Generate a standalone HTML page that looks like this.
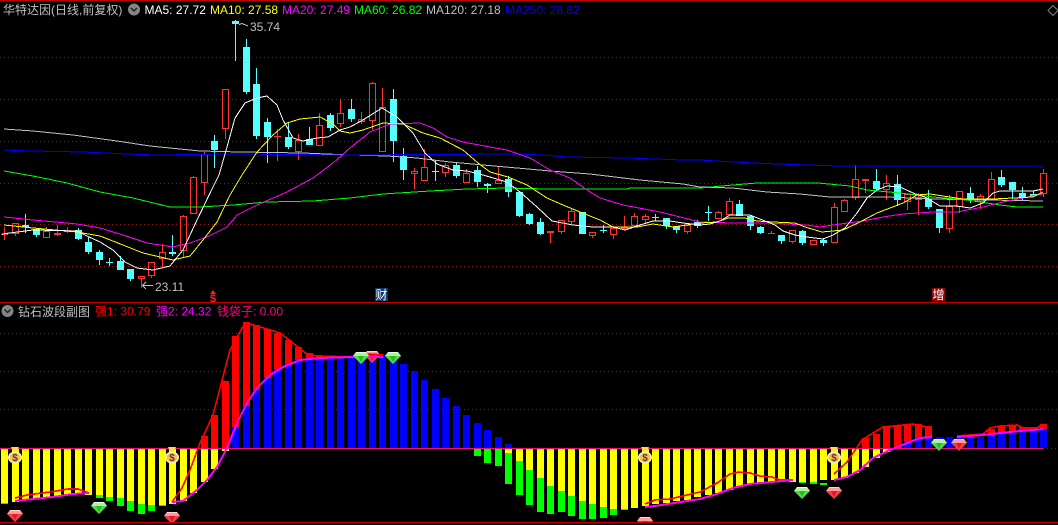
<!DOCTYPE html>
<html>
<head>
<meta charset="utf-8">
<style>
html,body{margin:0;padding:0;background:#000;width:1058px;height:525px;overflow:hidden}
svg{display:block}
text{font-family:"Liberation Sans","WenQuanYi Zen Hei","Noto Sans CJK SC",sans-serif;font-size:12px}
</style>
</head>
<body>
<svg width="1058" height="525" viewBox="0 0 1058 525" xmlns="http://www.w3.org/2000/svg">
<defs>
<clipPath id="cp"><rect x="0" y="303" width="1058" height="219"/></clipPath>
<g id="dr">
<polygon points="3,0 13,0 16,4 8,12 0,4" fill="#f04050"/>
<polygon points="3,0 13,0 16,4 0,4" fill="#ff9a9a"/>
<polygon points="5,4 11,4 8,10" fill="#e01828"/>
<path d="M3 .5h10" stroke="#ffd0d0" fill="none"/>
</g>
<g id="dg">
<polygon points="3,0 13,0 16,4 8,12 0,4" fill="#50d850"/>
<polygon points="3,0 13,0 16,4 0,4" fill="#b0f0a0"/>
<polygon points="5,4 11,4 8,10" fill="#20c020"/>
<path d="M3 .5h10" stroke="#e0ffe0" fill="none"/>
</g>
<g id="bag">
<polygon points="3,0 11,0 9,5 5,5" fill="#f8e040"/>
<ellipse cx="7" cy="10.500" rx="7" ry="6" fill="#fff2b0"/>
<ellipse cx="7" cy="10.500" rx="5.400" ry="4.800" fill="#f0c450"/>
<text x="7" y="14" text-anchor="middle" style="font-size:10px;font-weight:bold" fill="#703030">$</text>
</g>
</defs>
<rect width="1058" height="525" fill="#000"/>

<g shape-rendering="crispEdges">
<path d="M0 57.500H1058M0 99.500H1058M0 141.500H1058M0 183.500H1058M0 224.500H1058M0 266.500H1058M0 333.500H1058M0 371.500H1058M0 409.500H1058M1043 448.500H1058" stroke="#8a1414" stroke-width="1" stroke-dasharray="1 3" fill="none"/>
<rect x="0" y="0" width="1058" height="1" fill="#c00000"/>
<rect x="0" y="302" width="1058" height="1" fill="#c00000"/>
<rect x="0" y="522" width="1058" height="1" fill="#c00000"/>

<!-- cyan candles -->
<path fill="#54ffff" d="M25 214h1V233h-1zM22 225h7V227h-7zM36 228h1V237h-1zM33 229h7V235h-7zM78 228h1V240h-1zM75 230h7V239h-7zM88 237h1V254h-1zM85 242h7V252h-7zM99 250h1V265h-1zM96 252h7V260h-7zM109 258h1V266h-1zM106 262h7V263h-7zM120 256h1V270h-1zM117 261h7V270h-7zM130 269h1V281h-1zM127 269h7V279h-7zM172 235h1V256h-1zM169 252h7V254h-7zM214 135h1V168h-1zM211 141h7V150h-7zM235 20h1V61h-1zM232 21h7V24h-7zM246 39h1V94h-1zM243 47h7V92h-7zM256 68h1V139h-1zM253 84h7V136h-7zM267 118h1V163h-1zM264 122h7V137h-7zM288 122h1V149h-1zM285 137h7V147h-7zM309 127h1V145h-1zM306 139h7V145h-7zM330 113h1V131h-1zM327 115h7V128h-7zM351 99h1V122h-1zM348 109h7V119h-7zM393 89h1V162h-1zM390 99h7V141h-7zM403 148h1V180h-1zM400 156h7V170h-7zM435 160h1V181h-1zM432 171h7V172h-7zM456 162h1V178h-1zM453 165h7V176h-7zM477 166h1V187h-1zM474 170h7V182h-7zM487 183h1V193h-1zM484 184h7V186h-7zM508 176h1V197h-1zM505 179h7V192h-7zM519 192h1V217h-1zM516 192h7V216h-7zM529 213h1V225h-1zM526 214h7V224h-7zM540 218h1V235h-1zM537 222h7V234h-7zM582 212h1V234h-1zM579 212h7V234h-7zM603 225h1V233h-1zM600 230h7V231h-7zM655 214h1V221h-1zM652 217h7V218h-7zM666 218h1V229h-1zM663 218h7V226h-7zM676 226h1V233h-1zM673 226h7V230h-7zM697 220h1V228h-1zM694 222h7V226h-7zM708 206h1V221h-1zM705 212h7V213h-7zM739 200h1V216h-1zM736 204h7V216h-7zM750 215h1V230h-1zM747 216h7V226h-7zM760 226h1V234h-1zM757 227h7V233h-7zM781 235h1V244h-1zM778 235h7V241h-7zM802 230h1V245h-1zM799 231h7V243h-7zM823 238h1V246h-1zM820 240h7V243h-7zM876 169h1V191h-1zM873 181h7V189h-7zM897 175h1V206h-1zM894 184h7V200h-7zM928 190h1V209h-1zM925 199h7V207h-7zM939 209h1V233h-1zM936 209h7V228h-7zM970 187h1V203h-1zM967 193h7V200h-7zM1001 170h1V187h-1zM998 177h7V185h-7zM1012 182h1V199h-1zM1009 182h7V190h-7zM1022 187h1V200h-1zM1019 193h7V198h-7zM1033 191h1V196h-1zM1030 194h7V196h-7z"/>

<!-- red candles -->
<path fill="none" stroke="#ff3232" stroke-width="1" d="M1 234.500h7M4.500 227V240M12.500 223.500h6V233.500h-6zM15.500 234V236M43.500 231.500h6V237.500h-6zM46.500 227V231M54.500 233.500h6V234.500h-6zM57.500 225V233M57.500 235V236M64.500 230.500h6V231.500h-6zM67.500 227V230M67.500 232V233M138.500 276.500h6V278.500h-6zM141.500 279V288M148.500 262.500h6V275.500h-6zM151.500 276V278M159.500 252.500h6V258.500h-6zM162.500 244V252M162.500 259V267M180.500 216.500h6V250.500h-6zM183.500 215V216M183.500 251V258M190.500 177.500h6V213.500h-6zM193.500 176V177M201.500 154.500h6V182.500h-6zM204.500 152V154M204.500 183V195M222.500 89.500h6V128.500h-6zM225.500 129V139M274 136.500h7M277.500 129V161M295.500 140.500h6V151.500h-6zM298.500 134V140M298.500 152V160M316.500 125.500h6V145.500h-6zM319.500 113V125M337.500 113.500h6V123.500h-6zM340.500 99V113M340.500 124V127M358.500 119.500h6V121.500h-6zM361.500 112V119M361.500 122V124M369.500 83.500h6V120.500h-6zM372.500 82V83M372.500 121V130M379.500 107.500h6V151.500h-6zM382.500 88V107M411.500 171.500h6V173.500h-6zM414.500 168V171M414.500 174V189M421.500 167.500h6V180.500h-6zM424.500 149V167M442.500 165.500h6V172.500h-6zM445.500 163V165M445.500 173V177M463.500 173.500h6V182.500h-6zM466.500 169V173M495.500 180.500h6V183.500h-6zM498.500 166V180M547.500 231.500h6V232.500h-6zM550.500 233V243M558.500 220.500h6V231.500h-6zM561.500 232V234M568.500 211.500h6V221.500h-6zM571.500 208V211M571.500 222V224M589.500 232.500h6V235.500h-6zM592.500 236V238M610.500 228.500h6V234.500h-6zM613.500 226V228M613.500 235V239M621.500 227.500h6V228.500h-6zM624.500 216V227M624.500 229V230M631.500 216.500h6V225.500h-6zM634.500 213V216M634.500 226V227M642.500 216.500h6V219.500h-6zM645.500 214V216M645.500 220V223M684.500 225.500h6V231.500h-6zM687.500 232V234M715.500 212.500h6V218.500h-6zM718.500 211V212M726.500 201.500h6V214.500h-6zM729.500 198V201M768 233.500h7M771.500 231V234M789.500 230.500h6V241.500h-6zM792.500 242V243M810.500 240.500h6V244.500h-6zM831.500 207.500h6V242.500h-6zM834.500 203V207M841.500 200.500h6V211.500h-6zM844.500 199V200M852.500 179.500h6V197.500h-6zM855.500 165V179M855.500 198V200M862.500 179.500h6V180.500h-6zM865.500 181V193M883.500 183.500h6V189.500h-6zM886.500 175V183M886.500 190V200M904.500 194.500h6V201.500h-6zM907.500 202V210M915.500 197.500h6V199.500h-6zM918.500 193V197M918.500 200V215M946.500 206.500h6V228.500h-6zM949.500 195V206M949.500 229V233M956.500 191.500h6V206.500h-6zM959.500 207V213M977.500 196.500h6V201.500h-6zM980.500 194V196M980.500 202V209M988.500 179.500h6V199.500h-6zM991.500 172V179M1040.500 173.500h6V193.500h-6zM1043.500 169V173M1043.500 194V197"/>

<g fill="none" stroke-width="1">
<!-- MA120 -->
<polyline stroke="#c0c0c0" points="4,129 33,131 73,135 117,141 150,146 200,151 240,152 303,153 350,155 387,156 417,158 450,162 483,165 517,168 550,171 590,174 640,180 683,184 700,187 733,188 767,192 800,194 830,197 887,197 933,199 1043,201"/>
<!-- MA250 -->
<polyline stroke="#0000ff" points="4,150 30,151 83,152 127,154 157,155 230,154 350,155 517,154 543,155 567,157 627,158 683,160 700,160 733,162 777,164 840,166 1043,166"/>
<!-- MA60 -->
<polyline stroke="#00ff00" points="4,171 33,176 67,183 100,192 133,198 170,207 200,207 233,205 267,202 313,201 350,198 383,194 430,191 467,189 507,188 547,189 627,189 630,188 700,188 733,185 757,183 777,183 818,183 850,186 867,190 900,193 933,197 967,200 1000,205 1017,207 1043,207"/>
<!-- MA20 -->
<polyline stroke="#ff00ff" points="4,217 33,220 77,224 100,228 123,235 147,243 173,247 190,243 207,237 227,227 237,215 257,205 287,192 313,178 333,163 350,148 370,132 390,124 420,123 433,128 447,137 463,142 490,147 507,150 530,158 550,170 570,178 587,190 600,198 623,205 660,212 700,222 733,223 767,223 807,225 820,227 840,224 863,221 883,217 903,214 933,212 957,212 983,207 1003,202 1023,198 1043,194"/>
<!-- MA10 -->
<polyline stroke="#ffff00" points="4,225 33,228 77,232 100,236 123,245 143,253 173,260 190,256 203,240 217,222 230,195 242,175 257,152 273,135 287,123 300,119 320,117 333,124 340,131 350,133 363,130 383,123 403,124 423,133 440,138 463,150 478,163 490,172 508,177 527,185 547,198 563,205 580,212 600,220 613,227 637,227 653,224 673,227 700,223 717,222 728,218 745,218 757,221 773,222 795,223 805,227 822,232 843,230 860,222 877,213 890,208 903,203 917,195 930,194 943,196 963,199 993,199 1033,197 1043,192"/>
<!-- MA5 -->
<polyline stroke="#ffffff" points="2,234 33,230 77,231 87,236 100,242 113,250 125,262 137,268 153,270 170,266 183,250 197,220 213,187 219,175 227,147 235,118 245,103 257,98 267,96 277,105 283,120 293,138 303,141 317,138 328,137 340,130 350,127 363,120 382,108 397,117 413,133 425,153 437,164 453,170 467,171 483,175 507,182 520,192 537,207 552,221 573,225 593,227 613,227 625,230 640,225 653,221 670,221 683,223 700,225 710,224 720,221 730,215 750,215 765,221 775,225 783,231 795,235 807,237 823,239 833,235 845,228 857,213 867,198 877,190 887,186 900,187 913,193 927,198 940,206 957,206 970,208 983,203 993,193 1000,191 1033,191 1043,189"/>
</g>

<!-- high/low arrows -->
<path d="M239 24.500l3-1 6 2.500M142 285.500h11M146 282l-3.500 3.500 3.500 3.500" fill="none" stroke="#c0c0c0"/>

<!-- sub-panel bars -->
<path fill="#ffff00" d="M1 449h7V503h-7zM12 449h7V502h-7zM22 449h7V500h-7zM33 449h7V499h-7zM43 449h7V497h-7zM54 449h7V497h-7zM64 449h7V495h-7zM75 449h7V494h-7zM85 449h7V495h-7zM96 449h7V495h-7zM106 449h7V497h-7zM117 449h7V498h-7zM127 449h7V501h-7zM138 449h7V504h-7zM148 449h7V505h-7zM159 449h7V505h-7zM169 449h7V504h-7zM180 449h7V501h-7zM190 449h7V493h-7zM201 449h7V482h-7zM211 449h7V469h-7zM222 449h7V451h-7zM505 449h7V453h-7zM516 449h7V461h-7zM526 449h7V470h-7zM537 449h7V478h-7zM547 449h7V486h-7zM558 449h7V491h-7zM568 449h7V496h-7zM579 449h7V501h-7zM589 449h7V504h-7zM600 449h7V507h-7zM610 449h7V509h-7zM621 449h7V509h-7zM631 449h7V508h-7zM642 449h7V506h-7zM652 449h7V504h-7zM663 449h7V503h-7zM673 449h7V501h-7zM684 449h7V500h-7zM694 449h7V497h-7zM705 449h7V495h-7zM715 449h7V493h-7zM726 449h7V490h-7zM736 449h7V487h-7zM747 449h7V484h-7zM757 449h7V483h-7zM768 449h7V482h-7zM778 449h7V482h-7zM789 449h7V482h-7zM799 449h7V482h-7zM810 449h7V483h-7zM820 449h7V480h-7zM831 449h7V480h-7zM841 449h7V478h-7zM852 449h7V473h-7zM862 449h7V467h-7zM873 449h7V458h-7zM883 449h7V452h-7z"/>
<path fill="#00ff00" d="M1 503h7V504h-7zM96 495h7V498h-7zM106 497h7V501h-7zM117 498h7V506h-7zM127 501h7V511h-7zM138 504h7V514h-7zM148 505h7V511h-7zM159 505h7V506h-7zM474 449h7V456h-7zM484 449h7V463h-7zM495 449h7V466h-7zM505 453h7V484h-7zM516 461h7V495h-7zM526 470h7V505h-7zM537 478h7V512h-7zM547 486h7V514h-7zM558 491h7V512h-7zM568 496h7V516h-7zM579 501h7V519h-7zM589 504h7V519h-7zM600 507h7V518h-7zM610 509h7V515h-7zM621 509h7V510h-7zM799 482h7V483h-7zM810 482h7V484h-7zM820 483h7V485h-7z"/>
<path fill="#0000ff" d="M232 427h7V448h-7zM243 406h7V448h-7zM253 390h7V448h-7zM264 378h7V448h-7zM274 370h7V448h-7zM285 365h7V448h-7zM295 360h7V448h-7zM306 359h7V448h-7zM316 358h7V448h-7zM327 358h7V448h-7zM337 358h7V448h-7zM348 358h7V448h-7zM358 358h7V448h-7zM369 357h7V448h-7zM379 355h7V448h-7zM390 358h7V448h-7zM400 364h7V448h-7zM411 371h7V448h-7zM421 380h7V448h-7zM432 389h7V448h-7zM442 398h7V448h-7zM453 406h7V448h-7zM463 415h7V448h-7zM474 423h7V448h-7zM484 430h7V448h-7zM495 437h7V448h-7zM505 444h7V448h-7zM904 442h7V448h-7zM915 438h7V448h-7zM925 437h7V448h-7zM936 437h7V448h-7zM946 437h7V448h-7zM956 437h7V448h-7zM967 437h7V448h-7zM977 437h7V448h-7zM988 436h7V448h-7zM998 434h7V448h-7zM1009 432h7V448h-7zM1019 431h7V448h-7zM1030 430h7V448h-7zM1040 429h7V448h-7z"/>
<path fill="#ff0000" d="M201 436h7V448h-7zM211 415h7V448h-7zM222 381h7V448h-7zM232 336h7V427h-7zM243 322h7V406h-7zM253 325h7V390h-7zM264 329h7V378h-7zM274 333h7V370h-7zM285 340h7V365h-7zM295 347h7V360h-7zM306 353h7V359h-7zM316 355h7V358h-7zM327 357h7V358h-7zM337 356h7V358h-7zM862 438h7V448h-7zM873 434h7V448h-7zM883 426h7V448h-7zM894 426h7V448h-7zM904 425h7V442h-7zM915 424h7V438h-7zM925 426h7V437h-7zM988 429h7V436h-7zM998 426h7V434h-7zM1009 425h7V432h-7zM1019 427h7V431h-7zM1030 428h7V430h-7zM1040 424h7V429h-7z"/>
<rect x="0" y="448" width="1043" height="1" fill="#f0106a"/>
</g>

<!-- diamonds below lines -->
<g clip-path="url(#cp)">
<use href="#dr" x="7" y="510"/>
<use href="#dr" x="164" y="512"/>
<use href="#dr" x="637" y="517"/>
<use href="#dr" x="364" y="351"/>
<use href="#dr" x="826" y="487"/>
<use href="#dr" x="951" y="439"/>
</g>

<!-- sub-panel lines -->
<g fill="none" stroke-width="1.600" shape-rendering="crispEdges">
<polyline stroke="#ff0000" points="15,498 27,495 42,493 50,492 68,489 78,489 89,493"/>
<polyline stroke="#ff0000" points="172,502 182,488 190,470 200,443 213,415 230,350 242,328 247,323 267,329 280,333 293,343 308,355 320,356 350,357 370,354 383,355"/>
<polyline stroke="#ff0000" points="645,504 655,500 670,499 687,495 700,492 717,483 730,474 739,472 750,473 760,476 772,477 780,480 793,480"/>
<polyline stroke="#ff0000" points="834,474 847,462 862,440 873,433 883,427 913,424 922,426 932,428"/>
<polyline stroke="#ff0000" points="957,436 983,434 990,428 1000,426 1017,425 1023,428 1037,428 1043,424"/>
<polyline stroke="#ff00ff" stroke-width="2" points="15,501 33,499 53,497 73,494 89,493"/>
<polyline stroke="#ff00ff" stroke-width="2" points="172,502 183,501 197,490 207,480 217,467 227,448 237,423 247,403 257,388 270,375 283,367 300,360 320,358 350,357 383,357"/>
<polyline stroke="#ff00ff" stroke-width="2" points="645,507 655,506 700,499 717,494 733,488 750,484 772,482 793,480"/>
<polyline stroke="#ff00ff" stroke-width="2" points="834,480 847,477 860,470 873,458 890,450 907,443 920,438 932,437"/>
<polyline stroke="#ff00ff" stroke-width="2" points="957,437 983,435 1000,433 1020,431 1043,429"/>
</g>

<!-- bags -->
<use href="#bag" x="8" y="447"/>
<use href="#bag" x="165" y="447"/>
<use href="#bag" x="638" y="447"/>
<use href="#bag" x="827" y="447"/>
<!-- green diamonds -->
<use href="#dg" x="91" y="502"/>
<use href="#dg" x="353" y="352"/>
<use href="#dg" x="385" y="352"/>
<use href="#dg" x="794" y="487"/>
<use href="#dg" x="931" y="439"/>

<!-- event markers -->
<polygon points="213,290 216,294 210,294" fill="#ff2020"/>
<text x="213" y="302" text-anchor="middle" style="font-size:11px;font-weight:bold" fill="#ff2020">$</text>
<rect x="375" y="288" width="13" height="13" fill="#0a3a6e"/>
<text x="375.500" y="299" fill="#fff">财</text>
<rect x="932" y="288" width="13" height="13" fill="#8a0a0a"/>
<text x="932.500" y="299" fill="#fff">增</text>

<!-- value labels -->
<text x="250" y="31" fill="#c0c0c0">35.74</text>
<text x="155" y="291" fill="#c0c0c0">23.11</text>

<!-- header -->
<text x="3" y="14" fill="#c0c0c0">华特达因(日线,前复权)</text>
<circle cx="134" cy="9.500" r="6" fill="#858585"/>
<path d="M131 8l3 3 3-3" fill="none" stroke="#222" stroke-width="1.500"/>
<text x="144.500" y="14" fill="#ffffff">MA5: 27.72</text>
<text x="210" y="14" fill="#ffff00">MA10: 27.58</text>
<text x="282" y="14" fill="#ff00ff">MA20: 27.49</text>
<text x="354" y="14" fill="#00ff00">MA60: 26.82</text>
<text x="426" y="14" fill="#c0c0c0">MA120: 27.18</text>
<text x="505" y="14" fill="#0000ff">MA250: 28.82</text>
<path d="M1053 5.500l5 5-5 5-5-5z" fill="none" stroke="#808080"/>

<!-- sub header -->
<circle cx="7.500" cy="311" r="6" fill="#858585"/>
<path d="M4.500 309.500l3 3 3-3" fill="none" stroke="#222" stroke-width="1.500"/>
<text x="18" y="316" fill="#c0c0c0">钻石波段副图</text>
<text x="95" y="315.500" fill="#ff0000">强1: 30.79</text>
<text x="156" y="315.500" fill="#ff00ff">强2: 24.32</text>
<text x="217" y="315.500" fill="#ff0080">钱袋子: 0.00</text>
</svg>
</body>
</html>
